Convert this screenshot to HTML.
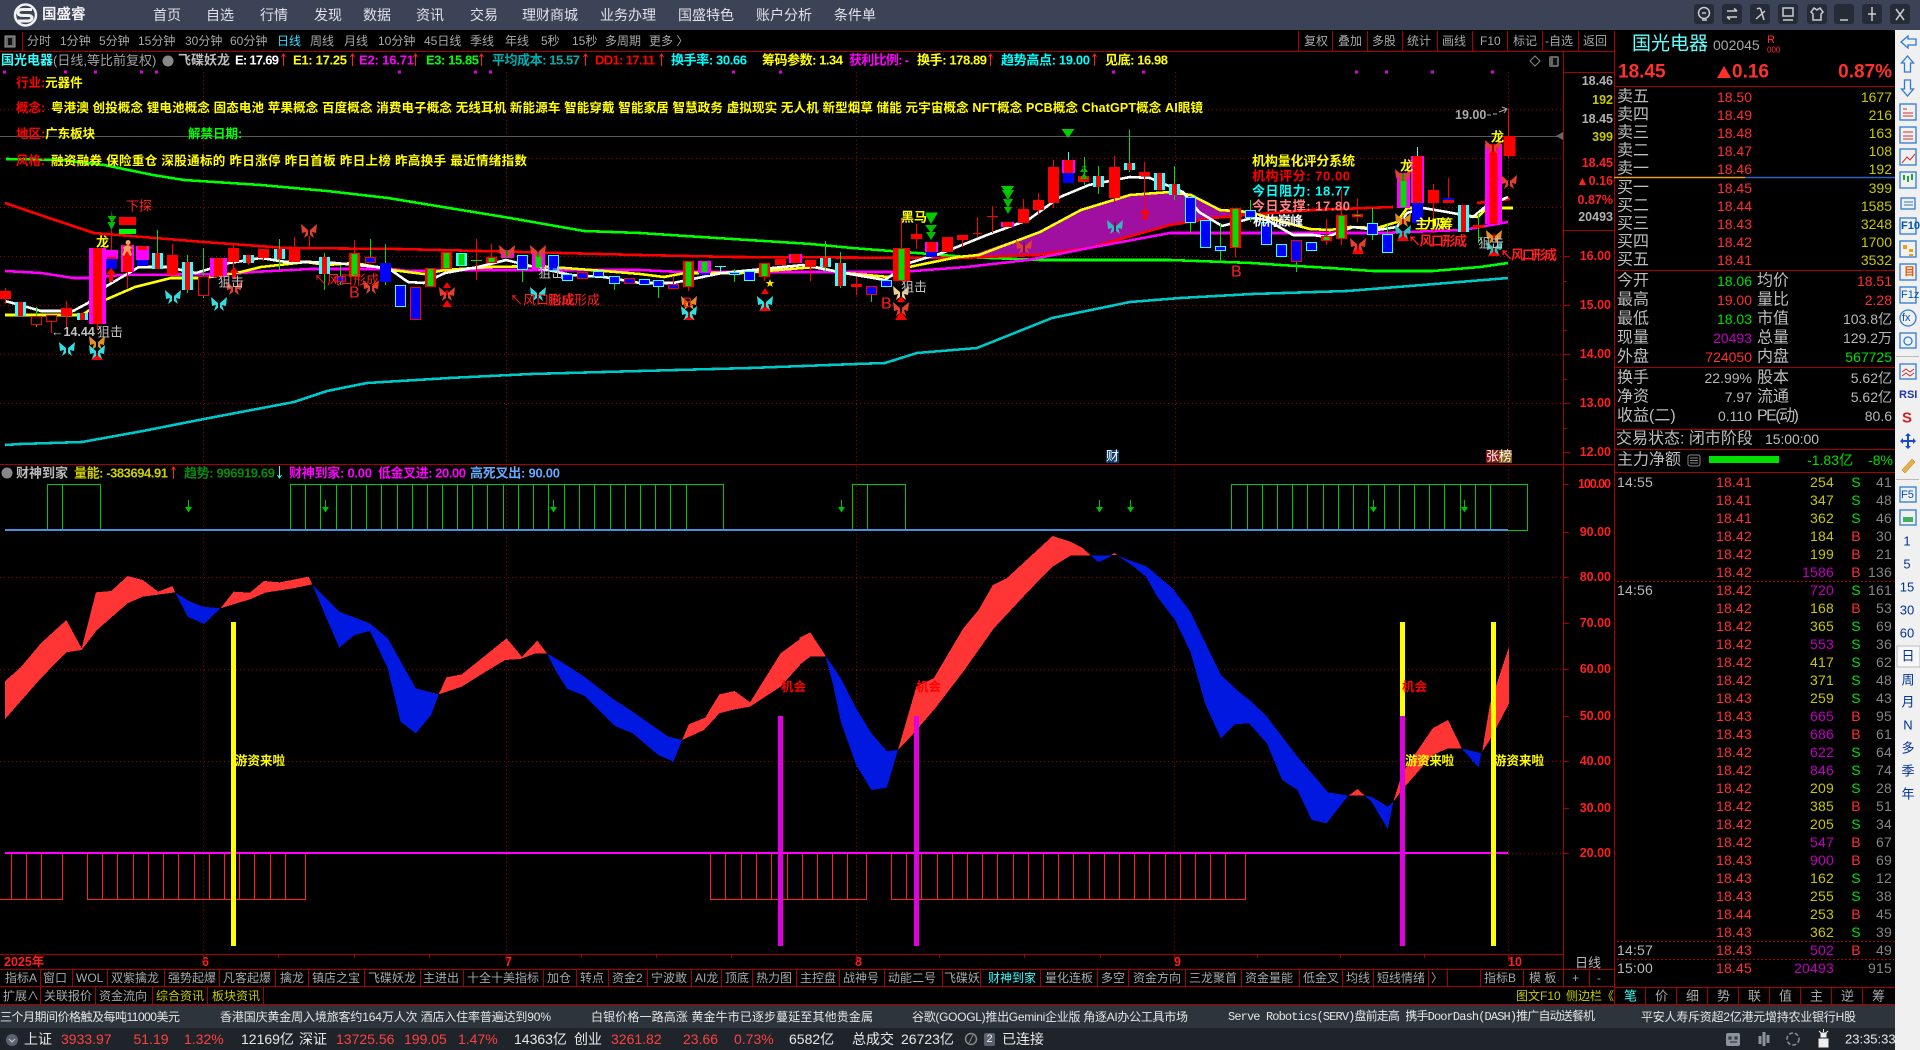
<!DOCTYPE html>
<html><head><meta charset="utf-8"><title>国盛睿</title>
<style>
html,body{margin:0;padding:0;background:#000;width:1920px;height:1050px;overflow:hidden}
svg{position:absolute;left:0;top:0}
text{font-family:"Liberation Sans","Noto Sans CJK SC",sans-serif;dominant-baseline:central}
.col{position:absolute;font:14px/18px "Liberation Sans","Noto Sans CJK SC",sans-serif;top:473px;white-space:nowrap;letter-spacing:.2px}
.col i{font-style:normal;color:#c000c0}
.g{color:#00e000}.r{color:#ff3030}
.b text{font-weight:bold}
.w{fill:none;stroke-width:1;shape-rendering:crispEdges}
.c{fill:none;shape-rendering:crispEdges}
.l{fill:none;stroke-width:2.6;shape-rendering:crispEdges;stroke-linejoin:bevel}
.d{stroke:#a00000;stroke-dasharray:1 3;fill:none}
.s{fill:none;stroke:#a80000;shape-rendering:crispEdges}
</style></head><body>
<svg width="1920" height="1050" viewBox="0 0 1920 1050">
<defs>
<g id="bf"><path d="M-1-1L-8-7L-7 2L-3 1L-5 7L-1 4ZM1-1L8-7L7 2L3 1L5 7L1 4Z"/><path d="M0-5V5" stroke="#000" stroke-width=".6"/></g>
</defs>
<rect width="1920" height="1050" fill="#000"/>
<!-- top bar -->
<rect width="1920" height="30" fill="#3c4356"/>
<circle cx="25.500" cy="15" r="10.500" fill="none" stroke="#f2f2f2" stroke-width="2.500"/>
<path d="M32 9.500H23Q18 9.500 18 12.500T23 15.500H28Q32 15.500 32 18T28 21H18" fill="none" stroke="#f2f2f2" stroke-width="3"/>
<text x="42" y="15" fill="#f2f2f2" font-size="14.500" font-weight="bold">国盛睿</text>
<g fill="#dfe2e8" font-size="14">
<text x="153" y="15">首页</text><text x="206" y="15">自选</text><text x="260" y="15">行情</text><text x="314" y="15">发现</text><text x="363" y="15">数据</text><text x="416" y="15">资讯</text><text x="470" y="15">交易</text><text x="522" y="15">理财商城</text><text x="600" y="15">业务办理</text><text x="678" y="15">国盛特色</text><text x="756" y="15">账户分析</text><text x="834" y="15">条件单</text>
</g>
<g fill="#262b38">
<rect x="1694" y="4" width="20" height="20" rx="3"/><rect x="1722" y="4" width="20" height="20" rx="3"/><rect x="1750" y="4" width="20" height="20" rx="3"/><rect x="1778" y="4" width="20" height="20" rx="3"/><rect x="1807" y="4" width="20" height="20" rx="3"/><rect x="1834" y="4" width="20" height="20" rx="3"/><rect x="1862" y="4" width="20" height="20" rx="3"/><rect x="1890" y="4" width="20" height="20" rx="3"/>
</g>
<g fill="none" stroke="#c9ccd2" stroke-width="1.500">
<circle cx="1704" cy="13" r="5.500"/><path d="M1702 13h4M1702 20h5"/>
<path d="M1727 11h10M1734 8.500l3 2.500M1727 17h10M1730 19.500l-3-2.500"/>
<path d="M1757 9q3-2 4 1l3 10M1756 19l9-8"/>
<rect x="1783" y="8" width="10" height="8"/><path d="M1783 20h10"/>
<path d="M1814 8l3 2 3-2 3 4-2 2v6h-8v-6l-2-2z"/>
<path d="M1840 20h8"/>
<path d="M1872 7v14M1868 14h8"/>
<path d="M1896 9l8 11M1904 9l-8 11"/>
</g>
<!-- toolbar -->
<rect x="5" y="36" width="10" height="11" fill="#666" stroke="#999"/><rect x="8" y="38" width="4" height="7" fill="#111"/>
<path d="M22.500 32V51" stroke="#a80000"/>
<g fill="#a8a8a8" font-size="12">
<text x="27" y="41">分时</text><text x="60" y="41">1分钟</text><text x="99" y="41">5分钟</text><text x="138" y="41">15分钟</text><text x="185" y="41">30分钟</text><text x="230" y="41">60分钟</text><text x="277" y="41" fill="#33ddff">日线</text><text x="310" y="41">周线</text><text x="344" y="41">月线</text><text x="378" y="41">10分钟</text><text x="424" y="41">45日线</text><text x="470" y="41">季线</text><text x="505" y="41">年线</text><text x="541" y="41">5秒</text><text x="572" y="41">15秒</text><text x="605" y="41">多周期</text><text x="649" y="41">更多 〉</text>
<text x="1304" y="41">复权</text><text x="1338" y="41">叠加</text><text x="1372" y="41">多股</text><text x="1407" y="41">统计</text><text x="1442" y="41">画线</text><text x="1480" y="41">F10</text><text x="1513" y="41">标记</text><text x="1545" y="41">-自选</text><text x="1583" y="41">返回</text>
</g>
<path class="s" d="M0 51.500H1614M1298.500 31V51M1332.500 31V51M1367.500 31V51M1402.500 31V51M1437.500 31V51M1472.500 31V51M1507.500 31V51M1542.500 31V51M1578.500 31V51"/>
<!-- frame lines -->
<path class="s" d="M1563.500 52V969M1614.500 31V1005M1563 72.500H1614M1563 230.500H1614M0 464.500H1614M0 954.500H1563M0 969.500H1614M0 986.500H1614M0 1004.500H1895M1614 86.500H1895M1614 270.500H1895M1614 367.500H1895M1614 429.500H1895M1614 449.500H1895M1614 472.500H1895M1614 987.500H1895" stroke-width="1"/>
<path d="M1563 234V230" stroke="#a80000"/>
<path d="M1614 177.500H1745" stroke="#e8a020" stroke-width="1.500"/><path d="M1745 177.500H1895" stroke="#3060c0" stroke-width="1.500"/>
<!-- legend -->
<g class="b" font-size="13">
<text x="1" y="60" fill="#33ffff" font-weight="bold">国光电器<tspan fill="#a0a0a0" font-weight="normal">(日线,等比前复权)</tspan></text>
<circle cx="168" cy="61" r="5.500" fill="#888"/>
<text x="178" y="60" fill="#bbb">飞碟妖龙</text>
<text x="235" y="60" fill="#fff" textLength="44">E: 17.69</text>
<text x="293" y="60" fill="#ffff00" textLength="54">E1: 17.25</text>
<text x="359" y="60" fill="#ff00ff" textLength="55">E2: 16.71</text>
<text x="426" y="60" fill="#00ff00" textLength="53">E3: 15.85</text>
<text x="492" y="60" fill="#00b0b0" textLength="88">平均成本: 15.57</text>
<text x="595" y="60" fill="#ff0000" textLength="60">DD1: 17.11</text>
<text x="671" y="60" fill="#00ffff" textLength="76">换手率: 30.66</text>
<text x="762" y="60" fill="#ffff00" textLength="81">筹码参数: 1.34</text>
<text x="849" y="60" fill="#ff00ff" textLength="60">获利比例: -</text>
<text x="917" y="60" fill="#ffff00" textLength="70">换手: 178.89</text>
<text x="1001" y="60" fill="#00ffff" textLength="89">趋势高点: 19.00</text>
<text x="1105" y="60" fill="#ffff00" textLength="63">见底: 16.98</text>
</g>
<g stroke="#ff2020" fill="none"><path d="M283.500 66V54M281.500 57l2-3 2 3M352.500 66V54M350.500 57l2-3 2 3M415.500 66V54M413.500 57l2-3 2 3M481.500 66V54M479.500 57l2-3 2 3M585.500 66V54M583.500 57l2-3 2 3M661.500 66V54M659.500 57l2-3 2 3M990.500 66V54M988.500 57l2-3 2 3M1094.500 66V54M1092.500 57l2-3 2 3"/></g>
<path d="M1535 56l5 5-5 5-5-5z" fill="none" stroke="#888"/><rect x="1549" y="56" width="10" height="11" rx="2" fill="#666"/><rect x="1553" y="58" width="4" height="7" fill="#111"/>
<path fill="#e000e0" d="M3 70.500h3v3h-3zM64 70.500h3v3h-3zM94 70.500h3v3h-3zM140 70.500h3v3h-3zM155 70.500h3v3h-3zM398 70.500h3v3h-3zM474 70.500h3v3h-3zM489 70.500h3v3h-3zM732 70.500h3v3h-3zM779 70.500h3v3h-3zM1112 70.500h3v3h-3zM1142 70.500h3v3h-3zM1355 70.500h3v3h-3zM1385 70.500h3v3h-3zM1431 70.500h3v3h-3zM1491 70.500h3v3h-3z"/>
<!-- grid -->
<g class="d"><path d="M0 109.500H1563M0 158.500H1563M0 207.500H1563M0 256.500H1563M0 305.500H1563M0 354.500H1563M0 403.500H1563M203.500 72V462M506.500 72V462M856.500 72V462M1175.500 72V462M1508.500 72V462"/>
<path d="M0 577.500H1563M0 669.500H1563M0 761.500H1563M1508 853.500H1563M203.500 466V954M506.500 466V954M856.500 466V954M1174.500 466V954M1508.500 466V954"/></g>
<path d="M0 136.500H1560" stroke="#585858"/><path d="M1556 136l7-4v8z" fill="#666"/>
<!-- lines -->
<path d="M967 257L1000 245L1040 232L1081 210L1130 195L1170 192L1191 195L1220 210L1250 212L1245 215L1213 218L1180 225L1170 225L1089 248L1036 255Z" fill="#a010a0"/>
<path class="l" stroke="#00c8c8" d="M5 445L20 444L82 442L143 431L204 419L294 402L327 391L367 383L449 378L531 374L640 371L750 368L856 364L885 363L917 353L977 348L1052 318L1130 302L1180 298L1252 294L1347 291L1447 283L1508 278"/>
<path class="l" stroke="#00ff00" d="M6 159L61 160L104 165L153 175L184 180L261 185L327 191L388 198L449 208L510 218L584 231L640 233L701 237L811 244L852 248L917 253L966 257L1040 260L1170 260L1252 263L1280 265L1330 268L1373 271L1433 271L1480 267L1508 263"/>
<path class="l" stroke="#ff0000" d="M5 203L49 218L94 233L204 242L286 248L400 249L640 255L734 257L958 258L1036 255L1089 248L1170 225L1213 218L1247 215L1313 210L1393 207M1477 203L1510 199"/>
<path class="l" stroke="#ff00ff" d="M5 271L41 273L73 278L90 278L122 275L229 274L253 272L310 269L392 269L408 271L449 270L640 270L681 272L901 272L966 267L1028 260L1089 248L1170 233L1380 233L1463 230L1508 222"/>
<path class="l" stroke="#ffff00" d="M5 315L82 315L105 300L135 287L171 278L204 278L241 272L261 267L306 262L326 265L355 263L392 270L424 274L445 270L490 267L539 266L604 271L640 274L664 277L685 273L742 273L815 267L844 273L889 277L909 267L958 257L979 255L1040 232L1081 210L1130 195L1170 192L1191 195L1220 210L1250 212L1283 222L1310 229L1330 230L1350 227L1377 228L1397 222L1407 208L1423 208L1447 212L1463 215L1478 217L1487 208L1513 208"/>
<path class="l" stroke="#ffffff" d="M5 301L20 305L41 311L73 311L88 303L105 287L139 267L167 267L196 273L229 263L261 258L286 262L310 262L335 263L388 268L408 282L424 283L445 273L478 267L506 260L539 268L571 275L604 277L640 283L673 283L722 273L803 265L844 273L885 280L909 263L942 253L987 235L1028 220L1060 197L1089 185L1130 177L1150 178L1183 192L1199 212L1222 226L1252 218L1267 220L1293 235L1313 235L1327 237L1353 227L1377 230L1397 227L1407 213L1423 208L1447 212L1473 217L1485 207L1508 197"/>
<!-- wicks -->
<path class="w" stroke="#ff0000" d="M5.500 288V304M51.500 322V333M66.500 301V327M111.500 230V282M127.500 272V288M172.500 244V255M233.500 243V270M248.500 263V265M263.500 258V261M294.500 237V249M309.500 236V250M354.500 240V253M476.500 239V280M491.500 244V257M673.500 277V284M688.500 287V291M764.500 277V281M810.500 267V281M856.500 277V295M901.500 218V248M916.500 224V249M962.500 240V246M977.500 217V237M973 233.500H982M992.500 206V233M987 216.500H998M1023.500 199V209M1038.500 193V215M1053.500 160V208M1114.500 156V201M1144.500 162V208M1235.500 248V257M1326.500 219V245M1341.500 190V245M1357.500 198V222M1433.500 184V233M1448.500 178V198M1508.500 109V158M97.500 324V330"/>
<path class="w" stroke="#00e000" d="M36.500 307V327M187.500 255V293M203.500 248V298M279.500 239V270M324.500 253V290M340.500 265V285M370.500 239V263M385.500 244V285M522.500 270V282M614.500 284V290M658.500 287V298M825.500 241V273M840.500 252V288M871.500 295V302M734.500 269V282M1084.500 157V185M1098.500 166V194M1129.500 130V172M1174.500 166V200M1190.500 223V233M1220.500 223V262M1250.500 200V222M1372.500 208V240M1387.500 224V234M1296.500 262V272M1478.500 213V243M157.500 230V253M471 260.500H482"/>
<path class="w" stroke="#33ffff" d="M1068.500 152V160M715 266.500H726M720.500 266V272M1417.500 147V156"/>
<!-- bodies -->
<path class="c" stroke="#ff00ff" stroke-width="17" d="M97.500 248V324M218.500 258V277M1493.500 144V224"/>
<path class="c" stroke="#ff00ff" stroke-width="13" d="M111.500 250V259M127.500 245V272M142.500 246V260M507.500 250V258M538.500 252V269M704.500 261V273M795.500 254V263M931.500 242V252M1007.500 222V227M1068.500 160V173M1403.500 173V208M1417.500 156V203"/>
<path class="c" stroke="#33ffff" stroke-width="11" d="M20.500 302V316M82.500 313V320M157.500 253V269M187.500 262V290M248.500 255V263M279.500 249V259M324.500 257V274M461.500 253V266M825.500 258V267M840.500 263V286M1098.500 176V187M1129.500 163V170M1159.500 173V190M1174.500 184V195M1463.500 205V232M400.500 285V307M522.500 255V270M553.500 255V271M567.500 274V281M598.500 271V277M614.500 276V284M644.500 279V285M658.500 280V287M734.500 272V275M749.500 271V281M886.500 280V287M1190.500 197V223M1205.500 220V248M1220.500 246V251M1250.500 210V218M1266.500 222V245M1281.500 244V257M1311.500 242V251M1372.500 223V235M1387.500 234V253"/>
<path class="c" stroke="#ff0000" stroke-width="11" d="M36.500 316V325M51.500 315V322M203.500 276V296M354.500 253V277M430.500 268V287M446.500 252V269M491.500 257V263M688.500 261V287M764.500 263V277M1235.500 208V248M1341.500 215V239M340.500 276V282M370.500 257V263M415.500 287V320M582.500 272V279M629.500 278V284M673.500 284V289M871.500 286V295M1296.500 240V262"/>
<path class="c" stroke="#ff0000" stroke-width="17" d="M901.500 248V281"/>
<path class="c" stroke="#000" stroke-width="9" d="M36.500 317V324M51.500 316V321M203.500 277V295"/>
<path class="c" stroke="#ff0000" stroke-width="11" d="M5.500 291V299M66.500 308V316M172.500 255V275M233.500 248V262M294.500 249V262M780.500 259V265M810.500 260V267M916.500 234V239M947.500 237V252M962.500 235V240M1023.500 209V223M1038.500 200V210M1053.500 167V203M1083.500 176V182M1114.500 167V198M1144.500 172V176M1357.500 214V217M1433.500 190V203M1448.500 198V203M1478.500 225V228M1326.500 236V241M856.500 284V287M263.500 249V258"/>
<path class="c" stroke="#ff0000" stroke-width="12" d="M1509.500 136V156"/>
<path class="c" stroke="#ff0000" stroke-width="9" d="M97.500 248V324M218.500 258V277M111.500 257V260M127.500 245V272M142.500 246V250M795.500 254V263M931.500 242V252M1007.500 222V227M1068.500 160V173M1417.500 156V203"/>
<path class="c" stroke="#ff0000" stroke-width="8" d="M1493.500 144V224"/>
<path class="c" stroke="#ff0000" stroke-width="5" d="M20.500 302V316M82.500 313V320M157.500 253V269M187.500 262V290M248.500 255V263M279.500 249V259M324.500 257V274M825.500 258V267M840.500 263V286M1098.500 176V187M1129.500 163V170M1159.500 173V190M1174.500 184V195M1463.500 205V232"/>
<path class="c" stroke="#00dd00" stroke-width="6" d="M354.500 254V276M430.500 269V286M446.500 253V268M461.500 254V265M491.500 258V262M507.500 251V257M538.500 253V268M688.500 262V286M704.500 262V272M764.500 264V276M901.500 249V280M1235.500 209V247M1341.500 216V238M1403.500 174V207M1357.500 215V216M1326.500 237V240"/>
<path class="c" stroke="#0000ff" stroke-width="9" d="M400.500 286V306M522.500 256V269M553.500 256V270M567.500 275V280M598.500 272V276M614.500 277V283M644.500 280V284M658.500 281V286M734.500 273V274M749.500 272V280M886.500 281V286M1190.500 198V222M1205.500 221V247M1220.500 247V250M1250.500 211V217M1266.500 223V244M1281.500 245V256M1311.500 243V250M1372.500 224V234M1387.500 235V252M340.500 277V281M370.500 258V262M415.500 288V319M582.500 273V278M629.500 279V283M673.500 285V288M871.500 287V294M1296.500 241V261"/>
<path class="c" stroke="#0000ff" stroke-width="11" d="M385.500 263V282M111.500 259V269M142.500 260V266M931.500 252V257M1068.500 173V183M704.500 273V275M1417.500 203V223M1448.500 198V200"/>
<!-- markers -->
<rect x="119" y="217" width="17" height="8" fill="#ff0000"/><rect x="119" y="229" width="17" height="5" fill="#00ff00"/>
<g fill="#00bb00"><path d="M111.500 210v6h-4l4.500 7 4.500-7h-4M111.500 222h-4l4 8 4-8zM1084 166l-4 6h8zM1084 173l-4 6h8zM1082 166h4l-2 6zM925 214h12l-6 10zM925 225l6 8 6-8zM926 232l5 8 5-8zM1002 190h12l-6 10zM1003 199l5 9 5-9zM1004 207l4 7 4-7z" /></g>
<path d="M1061.500 129h13l-6.500 9zM925 212.500h13l-6.500 10zM1001 186h13l-6.500 9z" fill="#00cc00"/>
<g fill="#ff0000">
<path d="M97 352l-6 8h12zM447 300l-5 7h10zM447 282l-4 6h8zM447 289l-4 6h8zM689 311l-6 9h12zM765 302l-6 9h12zM765 288l-4 6h8zM901 311l-6 9h12zM901 296l-4 6h8zM1358 245l-6 9h12zM1403 232l-6 9h12zM1403 218l-4 6h8zM1494 247l-6 9h12zM1494 233l-4 6h8z"/>
<path d="M111 268l-5 6h3v8h4v-8h3zM234 267l-5 6h3v6h4v-6h3zM1145 208l-5 6h3v6h4v-6h3z"/>
</g>
<path d="M770 279l1.200 3h3.100l-2.500 2 1 3-2.800-1.800-2.800 1.800 1-3-2.500-2h3.100z" fill="#ffe000"/>
<use href="#bf" x="67" y="349" fill="#33dddd"/><use href="#bf" x="97" y="343" fill="#e09020"/><use href="#bf" x="97" y="352" fill="#33dddd"/>
<use href="#bf" x="173" y="297" fill="#33dddd"/><use href="#bf" x="219" y="304" fill="#33dddd"/><use href="#bf" x="234" y="288" fill="#e04030"/>
<use href="#bf" x="309" y="231" fill="#e04030"/><use href="#bf" x="371" y="287" fill="#e04030"/><use href="#bf" x="447" y="294" fill="#e04030"/>
<use href="#bf" x="507" y="252" fill="#e04030"/><use href="#bf" x="538" y="252" fill="#e04030"/><use href="#bf" x="538" y="294" fill="#33dddd"/>
<use href="#bf" x="689" y="303" fill="#e09020"/><use href="#bf" x="689" y="313" fill="#33dddd"/><use href="#bf" x="765" y="303" fill="#33dddd"/>
<use href="#bf" x="901" y="293" fill="#f0d090"/><use href="#bf" x="901" y="309" fill="#e04030"/>
<use href="#bf" x="1024" y="247" fill="#e04030"/><use href="#bf" x="1115" y="227" fill="#33bbbb"/><use href="#bf" x="1358" y="245" fill="#e04030"/>
<use href="#bf" x="1403" y="220" fill="#e09020"/><use href="#bf" x="1403" y="232" fill="#33bbbb"/><use href="#bf" x="1494" y="237" fill="#e09020"/><use href="#bf" x="1494" y="248" fill="#33bbbb"/>
<use href="#bf" x="1403" y="176" fill="#e04030"/><use href="#bf" x="1493" y="147" fill="#e04030"/><use href="#bf" x="1509" y="182" fill="#e04030"/>
<path d="M128 240a2.500 2.500 0 1 0 .1 0zM123 247l5-2 5 3-3 1 2 6-2 1-3-5-3 5-2-1 2-5z" fill="#f0a060"/>
<!-- chart texts -->
<g font-size="13">
<text x="126" y="206" fill="#ff2020">下探</text>
<text x="96" y="242" fill="#ffff00" font-weight="bold">龙</text>
<text x="51" y="332" fill="#c0c0c0" font-weight="bold" font-size="12.500">←14.44</text>
<text x="97" y="332" fill="#c0c0c0">狙击</text>
<text x="218" y="282" fill="#c0c0c0">狙击</text>
<text x="314" y="280" fill="#ff2020">↖风口形成</text>
<text x="349" y="293" fill="#ff2020" font-size="16">B</text>
<text x="510" y="300" fill="#ff2020">↖风口形成</text><text x="548" y="300" fill="#ff2020">脑成形成</text>
<text x="538" y="273" fill="#c0c0c0">狙击</text>
<text x="881" y="304" fill="#ff2020" font-size="16">B</text>
<text x="901" y="287" fill="#c0c0c0">狙击</text>
<text x="901" y="217" fill="#ffff00" font-weight="bold">黑马</text>
<text x="1231" y="272" fill="#ff2020" font-size="16">B</text>
<text x="683" y="302" fill="#ff2020" font-size="14">B</text>
<text x="1252" y="161" fill="#ffff00" font-weight="bold" textLength="103">机构量化评分系统</text>
<text x="1252" y="176" fill="#ff0000" font-weight="bold" textLength="98">机构评分:  70.00</text>
<text x="1252" y="191" fill="#00ffff" font-weight="bold" textLength="98">今日阻力:  18.77</text>
<text x="1252" y="206" fill="#ff8080" font-weight="bold" textLength="98">今日支撑:  17.80</text>
<text x="1253" y="221" fill="#ffffff" font-weight="bold" textLength="50">机构巅峰</text>
<text x="1408" y="241" fill="#ff2020" font-weight="bold" textLength="59">↖风口形成</text>
<text x="1500" y="255" fill="#ff2020" font-weight="bold" textLength="57">↖风口形成</text>
<text x="1415" y="224" fill="#ffff00" font-weight="bold" textLength="38">主力吸筹</text>
<text x="1478" y="243" fill="#c0c0c0">狙击</text>
<text x="1400" y="166" fill="#ffff00" font-weight="bold">龙</text>
<text x="1491" y="137" fill="#ffff00" font-weight="bold">龙</text>
</g>
<text x="1455" y="115" fill="#aaa" font-weight="bold" font-size="12.500">19.00</text>
<path d="M1487 115h4M1493 114h4M1499 112l8-3M1502 107l5 2-3 4" stroke="#aaa" fill="none"/>
<rect x="1106" y="450" width="13" height="13" fill="#0d3a6a"/><text x="1106" y="456" font-size="13" fill="#fff">财</text>
<rect x="1486" y="450" width="13" height="13" fill="#8a1010"/><rect x="1499" y="450" width="13" height="13" fill="#8a5a10"/><text x="1486" y="456" font-size="13" fill="#fff">张榜</text>
<!-- axis upper -->
<g class="b" font-size="12.500" text-anchor="end">
<text x="1613" y="81" fill="#b0b0b0">18.46</text><text x="1613" y="100" fill="#c8c800">192</text><text x="1613" y="119" fill="#b0b0b0">18.45</text><text x="1613" y="137" fill="#c8c800">399</text><text x="1613" y="163" fill="#ff2020">18.45</text><text x="1613" y="181" fill="#ff2020">▲0.16</text><text x="1613" y="200" fill="#ff2020">0.87%</text><text x="1613" y="217" fill="#b0b0b0">20493</text>
<text x="1611" y="256" fill="#ff2020">16.00</text><text x="1611" y="305" fill="#ff2020">15.00</text><text x="1611" y="354" fill="#ff2020">14.00</text><text x="1611" y="403" fill="#ff2020">13.00</text><text x="1611" y="452" fill="#ff2020">12.00</text>
<text x="1611" y="484" fill="#ff2020" textLength="33">100.00</text><text x="1611" y="532" fill="#ff2020">90.00</text><text x="1611" y="577" fill="#ff2020">80.00</text><text x="1611" y="623" fill="#ff2020">70.00</text><text x="1611" y="669" fill="#ff2020">60.00</text><text x="1611" y="716" fill="#ff2020">50.00</text><text x="1611" y="761" fill="#ff2020">40.00</text><text x="1611" y="808" fill="#ff2020">30.00</text><text x="1611" y="853" fill="#ff2020">20.00</text>
</g>
<path class="s" d="M1563 256.500h7M1563 281.500h4M1563 305.500h7M1563 330.500h4M1563 354.500h7M1563 379.500h4M1563 403.500h7M1563 428.500h4M1563 452.500h7M1564 484.500h5M1564 532.500h5M1564 577.500h5M1564 623.500h5M1564 669.500h5M1564 716.500h5M1564 761.500h5M1564 808.500h5M1564 853.500h5"/>
<!-- lower legend -->
<circle cx="7" cy="473" r="5.500" fill="#888"/>
<g class="b" font-size="13">
<text x="16" y="473" fill="#bbb" font-weight="normal" textLength="52">财神到家</text>
<text x="74" y="473" fill="#d0d000" textLength="94">量能: -383694.91</text>
<text x="184" y="473" fill="#0a8a0a" textLength="91">趋势: 996919.69</text>
<text x="289" y="473" fill="#ff00ff" textLength="83">财神到家: 0.00</text>
<text x="378" y="473" fill="#ff00ff" textLength="88">低金叉进: 20.00</text>
<text x="470" y="473" fill="#66aaff" textLength="90">高死叉出: 90.00</text>
</g>
<path d="M173.500 479V467M171.500 470l2-3 2 3" stroke="#ff2020" fill="none"/><path d="M279.500 466V478M277.500 475l2 3 2-3" stroke="#33ffff" fill="none"/>
<!-- green boxes -->
<path class="w" stroke="#00c800" d="M47.500 530V484.500H100.500V530M62.500 484V530M290.500 530V484.500H723.500V530M305.500 484V530M320.500 484V530M336.500 484V530M351.500 484V530M366.500 484V530M381.500 484V530M397.500 484V530M412.500 484V530M427.500 484V530M442.500 484V530M457.500 484V530M472.500 484V530M487.500 484V530M503.500 484V530M518.500 484V530M533.500 484V530M548.500 484V530M564.500 484V530M579.500 484V530M594.500 484V530M610.500 484V530M625.500 484V530M640.500 484V530M655.500 484V530M670.500 484V530M686.500 484V530M852.500 530V484.500H905.500V530M867.500 484V530M1231.500 530V484.500H1527.500V530.500H1508M1247.500 484V530M1262.500 484V530M1277.500 484V530M1292.500 484V530M1307.500 484V530M1323.500 484V530M1338.500 484V530M1353.500 484V530M1368.500 484V530M1384.500 484V530M1399.500 484V530M1414.500 484V530M1429.500 484V530M1444.500 484V530M1460.500 484V530M1475.500 484V530M1490.500 484V530"/>
<rect x="5" y="529" width="1503" height="2" fill="#4a90e0"/>
<g fill="#00c000"><path id="ga" d="M187.500 500h1.500v7h3l-3.500 5.500-3.500-5.500h3v-7h-.500z"/><use href="#ga" x="137"/><use href="#ga" x="365"/><use href="#ga" x="653"/><use href="#ga" x="911"/><use href="#ga" x="942"/><use href="#ga" x="1185"/><use href="#ga" x="1276"/></g>
<!-- bands -->
<g transform="translate(0,465) scale(.5102,.33333)" shape-rendering="crispEdges">
<g fill="#ff3535">
<polygon points="10,648 40,608 80,535 130,465 160,550 188,382 218,378 250,333 280,345 310,380 338,363 343,382 280,395 250,415 190,495 160,555 130,562 80,640 10,762"/>
<polygon points="432,430 458,380 490,383 517,348 548,352 605,335 612,358 575,370 520,383 490,403"/>
<polygon points="860,688 875,637 905,628 993,520 1023,575 1053,527 1072,565 1050,565 1020,582 990,585 950,622 905,665"/>
<polygon points="1337,825 1350,778 1382,758 1410,688 1440,678 1470,712 1530,565 1568,522 1568,600 1530,665 1470,725 1440,733 1410,745 1380,795"/>
</g>
<g fill="#0018e0">
<polygon points="343,382 370,408 398,425 432,430 400,477 368,455"/>
<polygon points="612,358 665,440 725,475 760,520 815,670 860,688 845,750 815,805 785,770 760,610 725,498 695,510 665,548 640,460"/>
<polygon points="1072,565 1100,590 1145,635 1200,700 1240,740 1310,815 1337,825 1320,890 1290,870 1240,805 1205,783 1145,692 1112,672 1090,620"/>
</g>
</g>
<g transform="translate(800,465) scale(.5102,.33333)" shape-rendering="crispEdges">
<g fill="#ff3535">
<polygon points="-1,518 20,502 50,572 50,575 20,575 -1,600"/>
<polygon points="192,855 228,665 262,640 320,490 350,435 378,360 405,340 495,213 530,230 555,250 570,272 530,272 495,305 450,375 380,490 320,620 265,730 220,810"/>
<polygon points="610,270 622,270 616,264"/>
<polygon points="1075,992 1093,972 1107,992"/>
<polygon points="1163,1010 1180,925 1240,790 1270,765 1297,850 1270,850 1240,870 1180,975"/>
<polygon points="1337,860 1352,720 1390,543 1390,715 1352,825"/>
</g>
<g fill="#0018e0">
<polygon points="50,572 80,640 110,730 140,805 170,858 192,855 170,968 140,975 110,900 80,770 65,660"/>
<polygon points="570,272 612,272 585,292"/>
<polygon points="622,272 680,305 730,370 765,440 825,630 860,680 885,710 915,755 975,875 1035,982 1075,992 1060,1020 1032,1075 1003,1065 975,975 945,945 915,835 880,775 852,778 825,820 795,720 765,560 735,465 700,395 678,335 650,300"/>
<polygon points="1107,992 1120,995 1152,1025 1163,1010 1152,1092 1120,1010"/>
<polygon points="1297,850 1335,865 1330,908"/>
</g>
</g>
<!-- red bars -->
<path class="w" stroke="#ff2020" d="M0 899.500H62.500V853M11.500 853V899M26.500 853V899M41.500 853V899M87.500 853V899.500H305.500V853M102.500 853V899M117.500 853V899M133.500 853V899M148.500 853V899M163.500 853V899M178.500 853V899M194.500 853V899M209.500 853V899M224.500 853V899M239.500 853V899M254.500 853V899M270.500 853V899M285.500 853V899M710.500 853V899.500H866.500V853M725.500 853V899M741.500 853V899M756.500 853V899M771.500 853V899M787.500 853V899M802.500 853V899M817.500 853V899M832.500 853V899M847.500 853V899M891.500 853V899.500H1245.500V853M906.500 853V899M921.500 853V899M937.500 853V899M952.500 853V899M967.500 853V899M982.500 853V899M997.500 853V899M1013.500 853V899M1028.500 853V899M1043.500 853V899M1058.500 853V899M1073.500 853V899M1089.500 853V899M1104.500 853V899M1119.500 853V899M1134.500 853V899M1149.500 853V899M1165.500 853V899M1180.500 853V899M1195.500 853V899M1210.500 853V899M1225.500 853V899"/>
<rect x="5" y="852" width="1503" height="2" fill="#ff00ff"/>
<path class="c" stroke="#ffff00" stroke-width="5" d="M233.500 622V946M1493.500 622V946M1402.500 622V716"/>
<path class="c" stroke="#e000e0" stroke-width="5" d="M780.500 716V946M916.500 716V946M1402.500 716V946"/>
<g font-size="12.500" font-weight="bold">
<text x="235" y="761" fill="#ffff00" textLength="50">游资来啦</text><text x="1405" y="761" fill="#ffff00" textLength="49">游资来啦</text><text x="1494" y="761" fill="#ffff00" textLength="50">游资来啦</text>
<text x="781" y="687" fill="#ff0000">机会</text><text x="916" y="687" fill="#ff0000">机会</text><text x="1402" y="687" fill="#ff0000">机会</text>
</g>
<!-- date axis -->
<g font-size="12.500" font-weight="bold" fill="#ff2020">
<text x="4" y="962">2025年</text><text x="202" y="962">6</text><text x="505" y="962">7</text><text x="855" y="962">8</text><text x="1174" y="962">9</text><text x="1508" y="962">10</text>
</g>
<path class="s" d="M203.500 955v6M278.500 955v3M354.500 955v3M429.500 955v3M506.500 955v6M581.500 955v3M656.500 955v3M731.500 955v3M856.500 955v6M939.500 955v3M1024.500 955v3M1100.500 955v3M1174.500 955v6M1257.500 955v3M1340.500 955v3M1424.500 955v3M1508.500 955v6"/>
<text x="1575" y="963" fill="#b8b8b8" font-size="13">日线</text>
<!-- tabs -->
<g fill="#a8a8a8" font-size="12">
<text x="5" y="978">指标A</text><text x="43" y="978">窗口</text><text x="76" y="978">WOL</text><text x="111" y="978">双紫擒龙</text><text x="168" y="978">强势起爆</text><text x="223" y="978">凡客起爆</text><text x="280" y="978">擒龙</text><text x="312" y="978">镇店之宝</text><text x="368" y="978">飞碟妖龙</text><text x="423" y="978">主进出</text><text x="467" y="978">十全十美指标</text><text x="547" y="978">加仓</text><text x="580" y="978">转点</text><text x="612" y="978">资金2</text><text x="651" y="978">宁波敢</text><text x="695" y="978">AI龙</text><text x="725" y="978">顶底</text><text x="756" y="978">热力图</text><text x="800" y="978">主控盘</text><text x="843" y="978">战神号</text><text x="888" y="978">动能二号</text><text x="944" y="978">飞碟妖</text><text x="988" y="978" fill="#33ffff">财神到家</text><text x="1045" y="978">量化连板</text><text x="1101" y="978">多空</text><text x="1133" y="978">资金方向</text><text x="1189" y="978">三龙聚首</text><text x="1245" y="978">资金量能</text><text x="1303" y="978">低金叉</text><text x="1346" y="978">均线</text><text x="1377" y="978">短线情绪</text><text x="1431" y="978">〉</text><text x="1484" y="978">指标B</text><text x="1529" y="978">模 板</text><text x="1572" y="978">+</text><text x="1597" y="978">-</text>
<text x="3" y="996">扩展∧</text><text x="44" y="996">关联报价</text><text x="99" y="996">资金流向</text><text x="156" y="996" fill="#c8c800">综合资讯</text><text x="212" y="996" fill="#c8c800">板块资讯</text>
<text x="1516" y="996" fill="#c8c800">图文<tspan>F10</tspan></text><text x="1566" y="996" fill="#c8c800">侧边栏《</text>
<text x="1624" y="996" fill="#33ffff" font-size="13">笔</text><text x="1655" y="996" font-size="13">价</text><text x="1686" y="996" font-size="13">细</text><text x="1717" y="996" font-size="13">势</text><text x="1748" y="996" font-size="13">联</text><text x="1779" y="996" font-size="13">值</text><text x="1810" y="996" font-size="13">主</text><text x="1841" y="996" font-size="13">逆</text><text x="1872" y="996" font-size="13">筹</text>
</g>
<path class="s" d="M40.500 970V986M72.500 970V986M107.500 970V986M164.500 970V986M219.500 970V986M275.500 970V986M308.500 970V986M364.500 970V986M420.500 970V986M463.500 970V986M543.500 970V986M576.500 970V986M608.500 970V986M647.500 970V986M691.500 970V986M721.500 970V986M752.500 970V986M796.500 970V986M839.500 970V986M884.500 970V986M942.500 970V986M980.500 970V986M1040.500 970V986M1097.500 970V986M1128.500 970V986M1185.500 970V986M1241.500 970V986M1299.500 970V986M1342.500 970V986M1373.500 970V986M1428.500 970V986M1447.500 970V986M1480.500 970V986M1523.500 970V986M1563.500 970V986M1589.500 970V986M40.500 987V1004M95.500 987V1004M152.500 987V1004M207.500 987V1004M263.500 987V1004M1645.500 988V1004M1676.500 988V1004M1707.500 988V1004M1738.500 988V1004M1769.500 988V1004M1800.500 988V1004M1831.500 988V1004M1862.500 988V1004"/>
<!-- news -->
<rect y="1005" width="1920" height="23" fill="#2e343c"/>
<g fill="#e4e4e4" font-size="12">
<text x="0" y="1017" textLength="180">三个月期间价格触及每吨11000美元</text>
<text x="220" y="1017" textLength="331">香港国庆黄金周入境旅客约164万人次 酒店入住率普遍达到90%</text>
<text x="591" y="1017" textLength="282">白银价格一路高涨 黄金牛市已逐步蔓延至其他贵金属</text>
<text x="912" y="1017" textLength="276">谷歌(GOOGL)推出Gemini企业版 角逐AI办公工具市场</text>
<text x="1228" y="1017" textLength="367" style="font-family:'Liberation Mono','Noto Sans CJK SC',monospace">Serve Robotics(SERV)盘前走高 携手DoorDash(DASH)推广自动送餐机</text>
<text x="1641" y="1017" textLength="215">平安人寿斥资超2亿港元增持农业银行H股</text>
</g>
<!-- status -->
<rect y="1028" width="1920" height="22" fill="#1f242a"/>
<circle cx="12" cy="1040" r="6" fill="#5a6270"/><path d="M9 1039l3 3 3-3" stroke="#ccc" fill="none"/>
<g font-size="14" fill="#ff4040">
<text x="24" y="1039" fill="#e8e8e8">上证</text><text x="61" y="1039">3933.97</text><text x="133.500" y="1039">51.19</text><text x="184" y="1039">1.32%</text><text x="241" y="1039" fill="#e8e8e8">12169亿</text>
<text x="299" y="1039" fill="#e8e8e8">深证</text><text x="336" y="1039">13725.56</text><text x="404" y="1039">199.05</text><text x="458" y="1039">1.47%</text><text x="514" y="1039" fill="#e8e8e8">14363亿</text>
<text x="574" y="1039" fill="#e8e8e8">创业</text><text x="611" y="1039">3261.82</text><text x="683" y="1039">23.66</text><text x="734" y="1039">0.73%</text><text x="789" y="1039" fill="#e8e8e8">6582亿</text>
<text x="852" y="1039" fill="#e8e8e8">总成交</text><text x="901" y="1039" fill="#e8e8e8">26723亿</text>
<text x="1002" y="1039" fill="#e8e8e8">已连接</text>
<text x="1845" y="1039" fill="#e8e8e8" font-size="13">23:35:33</text>
</g>
<circle cx="971" cy="1039" r="5.500" fill="none" stroke="#888" stroke-width="1.500"/><path d="M969 1043l4-8" stroke="#888"/>
<rect x="984" y="1033" width="11" height="13" rx="2" fill="#5a6270"/><text x="986.500" y="1039" fill="#eee" font-size="11">2</text>
<rect x="1726" y="1033" width="14" height="13" rx="2" fill="#8d939c"/><path d="M1729 1037h2v2h-2zM1735 1037h2v2h-2zM1730 1042h7" stroke="#1f242a" fill="none"/>
<path d="M1760 1036v8M1764 1032v14M1768 1035v8" stroke="#8d939c" stroke-width="3"/>
<circle cx="1793" cy="1039" r="6" fill="none" stroke="#8d939c" stroke-width="1.500" stroke-dasharray="4 2"/>
<path d="M1819 1039h9v8h-9zM1821 1037h5v-4h-5zM1819 1031l2 2M1828 1031l-2 2M1823.500 1029v3" fill="#eee" stroke="#eee"/>
<!-- right panel -->
<text x="1632" y="44" fill="#66ffff" font-size="19">国光电器</text>
<text x="1713" y="45" fill="#a8a8a8" font-size="14">002045</text>
<text x="1767" y="40" fill="#ff3030" font-size="11">R</text><text x="1767" y="50" fill="#ff3030" font-size="8">000</text>
<path d="M1724 66l7 12h-14z" fill="#ff3030"/>
<g fill="#ff3030" font-size="19" font-weight="bold">
<text x="1618" y="72">18.45</text><text x="1732" y="72" textLength="37">0.16</text><text x="1892" y="72" text-anchor="end">0.87%</text>
</g>
<g fill="#bdbdbd" font-size="16">
<text x="1617" y="97">卖五</text><text x="1617" y="115">卖四</text><text x="1617" y="133">卖三</text><text x="1617" y="151">卖二</text><text x="1617" y="169">卖一</text>
<text x="1617" y="188">买一</text><text x="1617" y="206">买二</text><text x="1617" y="224">买三</text><text x="1617" y="242">买四</text><text x="1617" y="260">买五</text>
<text x="1617" y="281">今开</text><text x="1617" y="300">最高</text><text x="1617" y="319">最低</text><text x="1617" y="338">现量</text><text x="1617" y="357">外盘</text>
<text x="1757" y="281">均价</text><text x="1757" y="300">量比</text><text x="1757" y="319">市值</text><text x="1757" y="338">总量</text><text x="1757" y="357">内盘</text>
<text x="1617" y="378">换手</text><text x="1617" y="397">净资</text><text x="1617" y="416">收益(二)</text>
<text x="1757" y="378">股本</text><text x="1757" y="397">流通</text><text x="1757" y="416" textLength="42">PE(动)</text>
<text x="1616" y="439">交易状态: 闭市阶段</text><text x="1765" y="439" font-size="14" textLength="54">15:00:00</text>
<text x="1617" y="460">主力净额</text>
</g>
<g font-size="14" text-anchor="end" fill="#ff3030">
<text x="1752" y="97">18.50</text><text x="1752" y="115">18.49</text><text x="1752" y="133">18.48</text><text x="1752" y="151">18.47</text><text x="1752" y="169">18.46</text>
<text x="1752" y="188">18.45</text><text x="1752" y="206">18.44</text><text x="1752" y="224">18.43</text><text x="1752" y="242">18.42</text><text x="1752" y="260">18.41</text>
<text x="1752" y="281" fill="#00e000">18.06</text><text x="1752" y="300">19.00</text><text x="1752" y="319" fill="#00e000">18.03</text><text x="1752" y="338" fill="#c000c0">20493</text><text x="1752" y="357">724050</text>
<text x="1892" y="281">18.51</text><text x="1892" y="300">2.28</text><text x="1892" y="319" fill="#b8b8b8">103.8亿</text><text x="1892" y="338" fill="#b8b8b8">129.2万</text><text x="1892" y="357" fill="#00e000">567725</text>
<g fill="#b8b8b8"><text x="1752" y="378">22.99%</text><text x="1752" y="397">7.97</text><text x="1752" y="416">0.110</text><text x="1892" y="378">5.62亿</text><text x="1892" y="397">5.62亿</text><text x="1892" y="416">80.6</text></g>
<g fill="#c8c800"><text x="1892" y="97">1677</text><text x="1892" y="115">216</text><text x="1892" y="133">163</text><text x="1892" y="151">108</text><text x="1892" y="169">192</text><text x="1892" y="188">399</text><text x="1892" y="206">1585</text><text x="1892" y="224">3248</text><text x="1892" y="242">1700</text><text x="1892" y="260">3532</text></g>
<text x="1853" y="460" fill="#00e000">-1.83亿</text><text x="1893" y="460" fill="#00e000">-8%</text>
</g>
<rect x="1688" y="455" width="12" height="11" rx="2" fill="none" stroke="#888"/><path d="M1690 458h8M1690 460.500h8M1690 463h8" stroke="#888"/>
<rect x="1709" y="456" width="70" height="7" fill="#00e000"/>
<path d="M1617 581.500H1894M1617 941.500H1894M1617 959.500H1894" stroke="#b00000" stroke-dasharray="2 2"/>
<!-- sidebar -->
<rect x="1895" width="25" height="1020" y="30" fill="#f0f0f0"/>
<g fill="none" stroke="#2f7bd0" stroke-width="1.300">
<path d="M1901 42l7-6v3h8v6h-8v3zM1907.500 56l6 7h-3v9h-6v-9h-3zM1904.500 80h6v9h3l-6 7-6-7h3z"/>
<rect x="1900" y="104" width="16" height="16"/><rect x="1900" y="127" width="16" height="16"/><rect x="1900" y="149" width="16" height="16"/><rect x="1900" y="172" width="16" height="16"/>
<rect x="1901" y="198" width="14" height="11"/><rect x="1900" y="218" width="16" height="16"/><rect x="1900" y="241" width="16" height="16"/><rect x="1900" y="264" width="16" height="16"/><rect x="1900" y="287" width="16" height="16"/>
<circle cx="1908" cy="318" r="8"/><rect x="1900" y="333" width="16" height="15"/><circle cx="1908" cy="341" r="4"/>
<rect x="1900" y="364" width="16" height="15"/><rect x="1900" y="487" width="16" height="15"/><rect x="1900" y="510" width="16" height="15"/>
</g>
<g font-size="11" fill="#2f7bd0">
<path d="M1903 109h4M1903 113h10M1903 116h10M1903 132h10M1903 136h10M1903 139h10" stroke="#d03030"/>
<path d="M1902 163l5-6 3 3 5-6" stroke="#d03030" fill="none"/>
<path d="M1904 180v-5M1908 182v-6M1912 180v-6" stroke="#20a040" stroke-width="2"/>
<path d="M1904 202h9M1904 205h9" stroke="#2f7bd0"/>
<text x="1901" y="226" font-weight="bold" fill="#0055aa">F10</text>
<path d="M1903 245h4v4h-4zM1909 249h4v3h-4zM1909 254h4v2h-4z" fill="#e8a020"/>
<text x="1904" y="272" fill="#e06010" font-weight="bold">目</text>
<text x="1901" y="295" fill="#0055aa">F1z</text>
<text x="1902" y="318" fill="#0055aa">fx</text>
<path d="M1902 372l4-3 4 3 4-3M1902 376l4-3 4 3 4-3" stroke="#d03030" fill="none"/>
<text x="1899" y="395" fill="#2233aa" font-weight="bold">RSI</text>
<text x="1902" y="418" fill="#cc2222" font-weight="bold" font-size="15">S</text>
<path d="M1908 433l3 3h-2v4h4v-2l3 3-3 3v-2h-4v4h2l-3 3-3-3h2v-4h-4v2l-3-3 3-3v2h4v-4h-2z" fill="#1a4acc"/>
<path d="M1902 470l3 3 10-11-3-3z" fill="#e8b040" stroke="#b07020" stroke-width=".5"/>
<text x="1901" y="495" fill="#0055aa">F5</text>
<path d="M1903 517h10v5h-10z" fill="#40b060"/>
<path d="M1896 356.500h23M1896 479.500h23" stroke="#bbb"/>
</g>
<g font-size="13" fill="#003399" text-anchor="middle">
<text x="1907" y="541">1</text><text x="1907" y="564">5</text><text x="1907" y="587">15</text><text x="1907" y="610">30</text><text x="1907" y="633">60</text>
<rect x="1897" y="646" width="23" height="21" fill="#f7f7f7" stroke="#bbb"/>
<text x="1908" y="656">日</text><text x="1908" y="680">周</text><text x="1908" y="702">月</text><text x="1908" y="725">N</text><text x="1908" y="748">多</text><text x="1908" y="771">季</text><text x="1908" y="794">年</text>
</g>
<!-- text rows -->
<g font-size="12.500" font-weight="bold">
<text x="16" y="83" fill="#ff0000">行业:<tspan fill="#ffff00">元器件</tspan></text>
<text x="16" y="108" fill="#ff0000">概念:</text>
<text x="51" y="108" fill="#ffff00" textLength="1152">粤港澳 创投概念 锂电池概念 固态电池 苹果概念 百度概念 消费电子概念 无线耳机 新能源车 智能穿戴 智能家居 智慧政务 虚拟现实 无人机 新型烟草 储能 元宇宙概念 NFT概念 PCB概念 ChatGPT概念 AI眼镜</text>
<text x="16" y="134" fill="#ff0000">地区:<tspan fill="#ffff00">广东板块</tspan></text>
<text x="188" y="134" fill="#00ff00">解禁日期:</text>
<text x="16" y="161" fill="#ff0000">风格:</text>
<text x="51" y="161" fill="#ffff00" textLength="476">融资融券 保险重仓 深股通标的 昨日涨停 昨日首板 昨日上榜 昨高换手 最近情绪指数</text>
</g>
</svg>
<div class="col" style="left:1617px;color:#b8b8b8">14:55<br><br><br><br><br><br>14:56<br><br><br><br><br><br><br><br><br><br><br><br><br><br><br><br><br><br><br><br>14:57<br>15:00</div>
<div class="col r" style="left:1700px;width:52px;text-align:right">18.41<br>18.41<br>18.41<br>18.42<br>18.42<br>18.42<br>18.42<br>18.42<br>18.42<br>18.42<br>18.42<br>18.42<br>18.43<br>18.43<br>18.43<br>18.42<br>18.42<br>18.42<br>18.42<br>18.42<br>18.42<br>18.43<br>18.43<br>18.43<br>18.44<br>18.43<br>18.43<br>18.45</div>
<div class="col" style="left:1770px;width:64px;text-align:right;color:#c8c800">254<br>347<br>362<br>184<br>199<br><i>1586</i><br><i>720</i><br>168<br>365<br><i>553</i><br>417<br>371<br>259<br><i>665</i><br><i>686</i><br><i>622</i><br><i>846</i><br>209<br>385<br>205<br><i>547</i><br><i>900</i><br>162<br>255<br>253<br>362<br><i>502</i><br><i>20493</i></div>
<div class="col g" style="left:1846px;width:20px;text-align:center">S<br>S<br>S<br><span class="r">B</span><br><span class="r">B</span><br><span class="r">B</span><br>S<br><span class="r">B</span><br>S<br>S<br>S<br>S<br>S<br><span class="r">B</span><br><span class="r">B</span><br>S<br>S<br>S<br><span class="r">B</span><br>S<br><span class="r">B</span><br><span class="r">B</span><br>S<br>S<br><span class="r">B</span><br>S<br><span class="r">B</span></div>
<div class="col" style="left:1862px;width:30px;text-align:right;color:#858585">41<br>48<br>46<br>30<br>21<br>136<br>161<br>53<br>69<br>36<br>62<br>48<br>43<br>95<br>61<br>64<br>74<br>28<br>51<br>34<br>67<br>69<br>12<br>38<br>45<br>39<br>49<br>915</div>
</body></html>
